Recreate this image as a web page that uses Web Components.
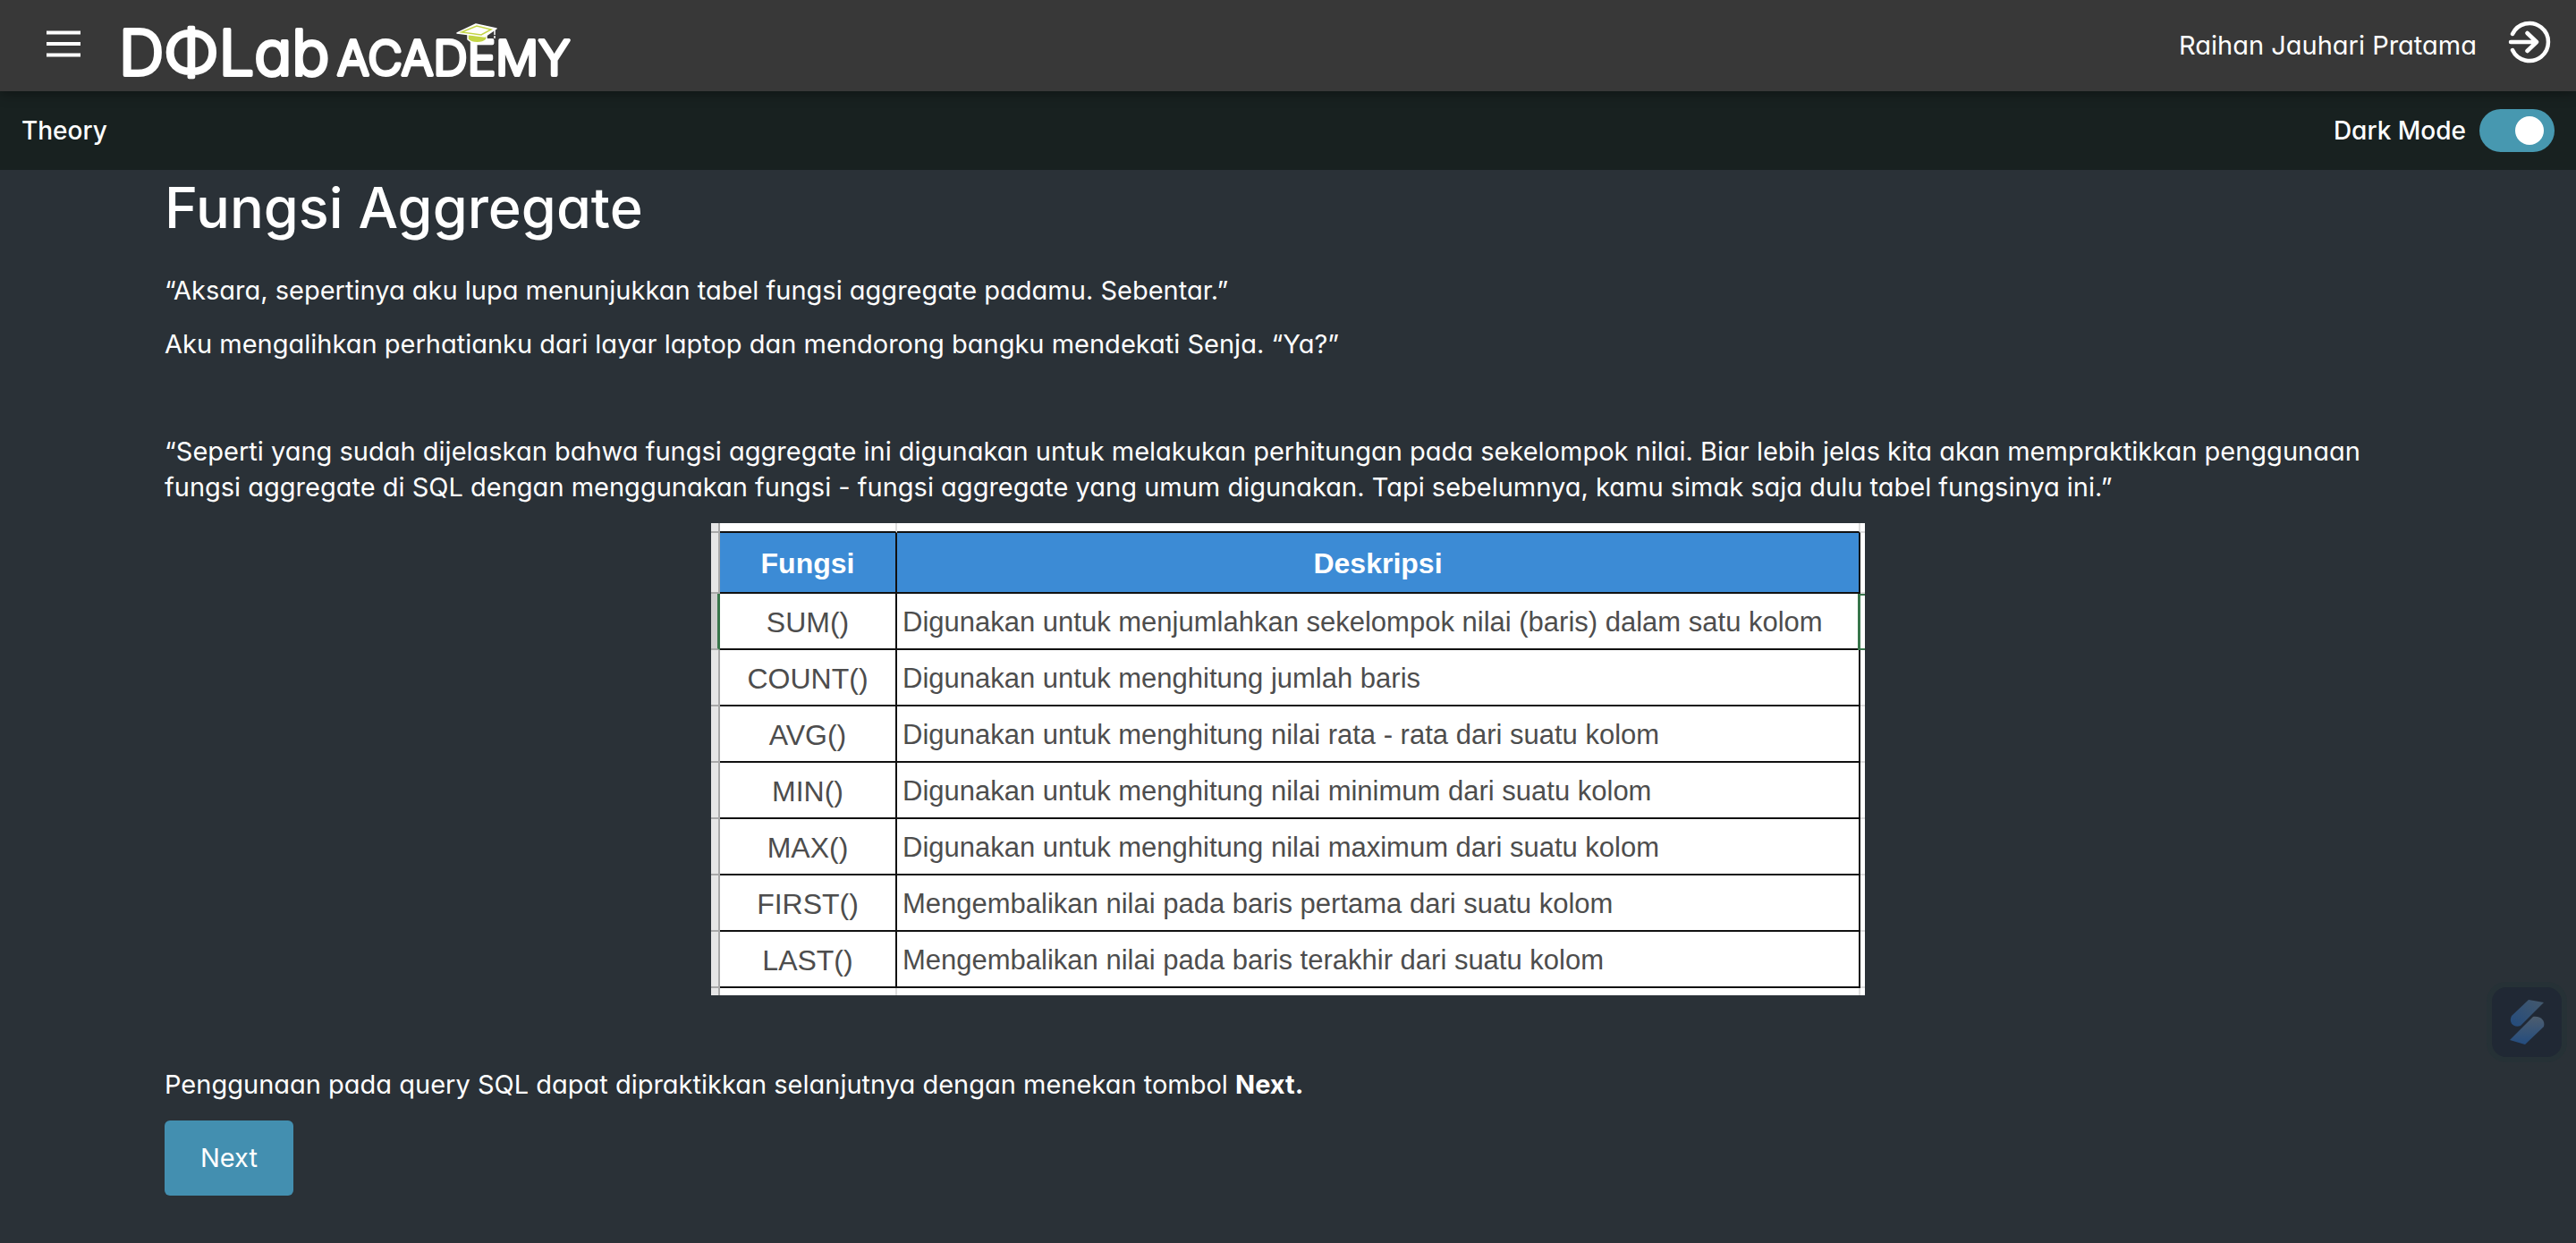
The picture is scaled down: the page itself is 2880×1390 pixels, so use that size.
<!DOCTYPE html>
<html lang="id">
<head>
<meta charset="utf-8">
<title>Fungsi Aggregate</title>
<style>
  body { margin: 0; min-height: 100vh; background: #2a3137; color: #fff;
    font: 400 29px/40px Inter, "Open Sans", sans-serif; font-feature-settings: "cv11"; }
</style>
</head>
<body>
<app-header user="Raihan Jauhari Pratama"></app-header>
<theory-bar>Theory</theory-bar>
<lesson-page>
  <span slot="title">Fungsi Aggregate</span>
  <lesson-text>“Aksara, sepertinya aku lupa menunjukkan tabel fungsi aggregate padamu. Sebentar.”</lesson-text>
  <lesson-text>Aku mengalihkan perhatianku dari layar laptop dan mendorong bangku mendekati Senja. “Ya?”</lesson-text>
  <lesson-text></lesson-text>
  <lesson-text>“Seperti yang sudah dijelaskan bahwa fungsi aggregate ini digunakan untuk melakukan perhitungan pada sekelompok nilai. Biar lebih jelas kita akan mempraktikkan penggunaan fungsi aggregate di SQL dengan menggunakan fungsi - fungsi aggregate yang umum digunakan. Tapi sebelumnya, kamu simak saja dulu tabel fungsinya ini.”</lesson-text>
  <function-table></function-table>
  <lesson-text></lesson-text>
  <lesson-text>Penggunaan pada query SQL dapat dipraktikkan selanjutnya dengan menekan tombol <b>Next.</b></lesson-text>
  <next-button>Next</next-button>
</lesson-page>
<help-widget></help-widget>

<script>
const define = (name, html, setup) => customElements.define(name, class extends HTMLElement {
  constructor() {
    super();
    this.attachShadow({ mode: "open" }).innerHTML = html;
  }
  connectedCallback() { if (setup) setup(this, this.shadowRoot); }
});

define("academy-logo", `
<style>
  :host { display: block; }
  a { display: block; }
  svg { display: block; overflow: visible; }
  text { font-family: Inter, sans-serif; fill: #fff; stroke: #fff; stroke-linejoin: round; font-feature-settings: "cv11"; }
  .big { font-size: 70px; font-weight: 300; stroke-width: 4; }
  .small { font-size: 53px; font-weight: 300; stroke-width: 4; }
</style>
<a href="#" aria-label="DQLab Academy">
<svg width="510" height="102" viewBox="0 0 510 102">
  <text class="big" x="-5" y="84">DΦLab</text>
  <text class="small" x="239" y="84">ACADEMY</text>
  <path d="M385 38v6c5 5 16 5 21 0v-7z" fill="#c3d545" stroke="#fff" stroke-width="1.500"/>
  <path d="M373 37l21-10 23 5-13 9z" fill="#fff" stroke="#fff" stroke-width="1.500" stroke-linejoin="round"/>
  <path d="M378 36l17-7 16 4-11 6z" fill="#fff" stroke="#c3d545" stroke-width="1.500"/>
  <path d="M415 32v11" stroke="#fff" stroke-width="1.500" stroke-dasharray="7 1 3"/>
</svg></a>`);

define("app-header", `
<style>
  :host { display: block; position: relative; box-shadow: 0 2px 14px rgba(0,0,0,.4); }
  header { display: flex; align-items: center; height: 102px; box-sizing: border-box; padding: 0 28px 0 52px; background: #383838; }
  button { display: block; padding: 0; border: 0; background: none; color: inherit; }
  svg { display: block; }
  .menu { margin-right: 48px; margin-bottom: 4px; }
  .user { margin-left: auto; margin-right: 35px; }
  .exit { margin-bottom: 8px; }
</style>
<header>
  <button class="menu" aria-label="Menu"><svg width="38" height="30" viewBox="0 0 38 30"><path d="M0 2.5h38M0 15h38M0 27.5h38" stroke="#fff" stroke-width="4"/></svg></button>
  <academy-logo></academy-logo>
  <span class="user"></span>
  <button class="exit" aria-label="Keluar"><svg width="48" height="48" viewBox="0 0 48 48" fill="none" stroke="#fff" stroke-width="4.5" stroke-linecap="round" stroke-linejoin="round"><path d="M5 15a21 21 0 1 1 0 18M3 24h29M21.500 14l10.500 10-10.500 10"/></svg></button>
</header>`, (el, root) => { root.querySelector(".user").textContent = el.getAttribute("user"); });

define("theory-bar", `
<style>
  :host { display: flex; align-items: center; justify-content: space-between; height: 88px; box-sizing: border-box; padding: 0 24px; background: #182120; font-size: 28px; font-weight: 500; }
  label { display: flex; align-items: center; gap: 15px; }
  input { appearance: none; display: flex; align-items: center; justify-content: flex-start; box-sizing: border-box; width: 84px; height: 48px; margin: 0; padding: 0 12px; border-radius: 24px; background: #888; }
  input::before { content: ""; width: 32px; height: 32px; border-radius: 50%; background: #fff; }
  input:checked { background: #4798b0; justify-content: flex-end; }
</style>
<span><slot></slot></span>
<label for="dark">Dark Mode <input id="dark" type="checkbox" role="switch" checked></label>`);

define("lesson-page", `
<style>
  :host { display: block; padding: 6px 184px 53px; }
  h1 { margin: 0 0 37px; font-size: 63px; line-height: 72px; font-weight: 500; }
</style>
<main><h1><slot name="title"></slot></h1><slot></slot></main>`);

define("lesson-text", `
<style>
  :host { display: block; margin-bottom: 20px; }
  p { margin: 0; min-height: 40px; }
</style>
<p><slot></slot></p>`);

define("function-table", `
<style>
  :host { display: block; width: fit-content; margin: 0 auto 20px; }
  table { width: 1290px; table-layout: fixed; border-collapse: separate; border-spacing: 0; background: #fff; color: #4d4d4d; font: 400 32px/36px "Liberation Sans", Arial, sans-serif; }
  td, th { box-sizing: border-box; height: 63px; padding: 2px 0 0; border: 0 solid #111; border-width: 0 2px 2px 0; text-align: center; font-weight: 400; }
  .g { background: #e6e6e6; border-color: #a9a9a9; }
  .text { text-align: left; padding-left: 6px; font-size: 31px; }
  .end { border-right: 0; border-color: #ddd; }
  .top td { height: 11px; border-right-color: #ddd; }
  .bottom td { height: 8px; border-bottom: 0; border-right-color: #ddd; }
  .top .g, .bottom .g { border-color: #a9a9a9; }
  .top .end { border-color: #ddd; }
  .head th { height: 68px; background: #3c8bd5; color: #fff; font-weight: 700; }
  .active .g { background: #cfcfcf; border-right: 3px solid #38764b; }
  .active .end { box-shadow: -3px 0 #38764b, inset 0 2px #38764b; border-bottom-color: #38764b; }
</style>
<table>
  <colgroup><col style="width:10px"><col style="width:198px"><col><col style="width:5px"></colgroup>
  <thead>
    <tr class="top" aria-hidden="true"><td class="g"></td><td></td><td></td><td class="end"></td></tr>
    <tr class="head"><td class="g"></td><th scope="col">Fungsi</th><th scope="col">Deskripsi</th><td class="end"></td></tr>
  </thead>
  <tbody></tbody>
</table>`, (el, root) => {
  const rows = [
    ["SUM()", "Digunakan untuk menjumlahkan sekelompok nilai (baris) dalam satu kolom"],
    ["COUNT()", "Digunakan untuk menghitung jumlah baris"],
    ["AVG()", "Digunakan untuk menghitung nilai rata - rata dari suatu kolom"],
    ["MIN()", "Digunakan untuk menghitung nilai minimum dari suatu kolom"],
    ["MAX()", "Digunakan untuk menghitung nilai maximum dari suatu kolom"],
    ["FIRST()", "Mengembalikan nilai pada baris pertama dari suatu kolom"],
    ["LAST()", "Mengembalikan nilai pada baris terakhir dari suatu kolom"],
  ];
  root.querySelector("tbody").innerHTML = rows.map(([name, text], i) =>
    `<tr${i ? "" : ' class="active"'}><td class="g"></td><td>${name}</td><td class="text">${text}</td><td class="end"></td></tr>`).join("") +
    '<tr class="bottom" aria-hidden="true"><td class="g"></td><td></td><td></td><td class="end"></td></tr>';
});

define("next-button", `
<style>
  :host { display: block; }
  button { display: block; padding: 21px 40px; border: 0; border-radius: 6px; background: #438fb0; color: #fff; font: inherit; line-height: 42px; font-feature-settings: inherit; }
</style>
<button type="button"><slot></slot></button>`);

define("help-widget", `
<style>
  :host { display: block; position: fixed; right: 10px; bottom: 202px; }
  button { display: block; padding: 0; border: 6px solid #263136; border-radius: 22px; background: #202834; }
  svg { display: block; }
</style>
<button aria-label="Bantuan"><svg width="78" height="78" viewBox="0 0 78 78">
  <defs>
    <linearGradient id="a" x1="1" y1="0" x2="0" y2="1"><stop offset="0" stop-color="#45596c"/><stop offset="1" stop-color="#234b7d"/></linearGradient>
    <linearGradient id="b" x1="0" y1="0" x2="0" y2="1"><stop offset="0" stop-color="#4d5d6e"/><stop offset="1" stop-color="#234c7f"/></linearGradient>
  </defs>
  <path d="M41 14l17 3-26 26c-7 3-14-3-10-11z" fill="url(#a)"/>
  <path d="M20 59l26-26c8-1 14 4 12 11L37 64z" fill="url(#b)"/>
</svg></button>`);
</script>
</body>
</html>
